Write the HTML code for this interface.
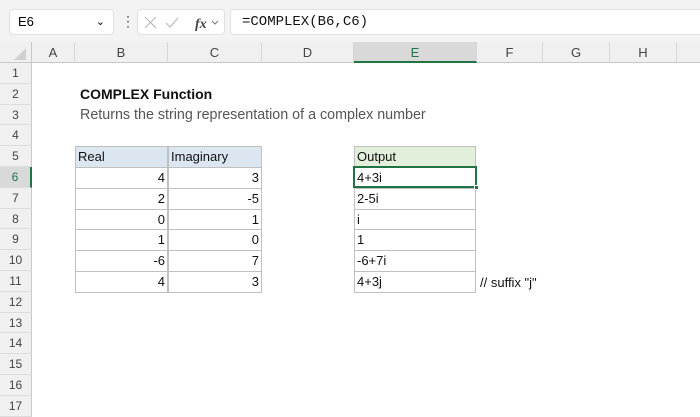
<!DOCTYPE html><html><head><style>
body{margin:0;width:700px;height:400px;overflow:hidden;background:#fff;font-family:"Liberation Sans",sans-serif;position:relative}
div{position:absolute;box-sizing:border-box}
.top{left:0;top:0;width:700px;height:42px;background:#f3f3f3}
.box{background:#fff;border:1px solid #e0e0e0;border-radius:4px}
.ch{top:42px;height:21px;background:#f0f0f0;border-right:1px solid #d6d6d6;border-bottom:1px solid #c8c8c8;font-size:13px;color:#444;text-align:center;line-height:21px}
.rh{left:0;width:32px;height:20.8px;background:#f0f0f0;border-bottom:1px solid #dcdcdc;border-right:1px solid #c8c8c8;font-size:12px;color:#444;text-align:center;line-height:21px}
.c{height:21.8px;border:1px solid #c0c0c0;margin:-1px 0 0 -1px;font-size:13px;line-height:20px;padding:0 2px;color:#111}
.r{text-align:right}
</style></head><body>
<div class="top"></div>
<div class="box" style="left:9px;top:9px;width:105px;height:26px;font-size:13px;line-height:24px;padding-left:8px">E6<span style="position:absolute;right:8px;top:0;font-size:11px">&#8964;</span></div>
<div style="left:121px;top:14px;font-size:14px;color:#555;line-height:14px">&#8942;</div>
<div class="box" style="left:137px;top:9px;width:88px;height:26px;">
<svg width="88" height="26" style="position:absolute;left:0;top:0"><path d="M7 7l11 11M18 7L7 18" stroke="#bbb" stroke-width="1.2" fill="none"/><path d="M28 13l4 4 8-9" stroke="#bbb" stroke-width="1.2" fill="none"/><text x="57" y="18" font-family="Liberation Serif" font-style="italic" font-weight="bold" font-size="14" fill="#444">fx</text><path d="M74 11l3 3 3-3" stroke="#777" fill="none"/></svg></div>
<div class="box" style="left:230px;top:9px;width:480px;height:26px;font-family:'Liberation Mono',monospace;font-size:14px;line-height:24px;padding-left:11px;color:#111">=COMPLEX(B6,C6)</div>
<div style="left:0;top:42px;width:32px;height:21px;background:#f0f0f0;border-right:1px solid #c8c8c8;border-bottom:1px solid #c8c8c8"><svg width="32" height="21" style="position:absolute;left:0;top:0"><path d="M26 6v12H14z" fill="#d0d0d0"/></svg></div>
<div class="ch" style="left:32px;width:43px">A</div>
<div class="ch" style="left:75px;width:93px">B</div>
<div class="ch" style="left:168px;width:94px">C</div>
<div class="ch" style="left:262px;width:92px">D</div>
<div class="ch" style="left:354px;width:123px;background:#d9d9d9;border-bottom:2px solid #217346;color:#217346">E</div>
<div class="ch" style="left:477px;width:66px">F</div>
<div class="ch" style="left:543px;width:67px">G</div>
<div class="ch" style="left:610px;width:67px">H</div>
<div class="ch" style="left:677px;width:30px"></div>
<div class="rh" style="top:63px">1</div><div class="rh" style="top:83.8px">2</div><div class="rh" style="top:104.6px">3</div><div class="rh" style="top:125.4px">4</div><div class="rh" style="top:146.2px">5</div>
<div class="rh" style="top:167px;background:#d9d9d9;color:#217346;border-right:2px solid #217346">6</div>
<div class="rh" style="top:187.8px">7</div><div class="rh" style="top:208.6px">8</div><div class="rh" style="top:229.4px">9</div><div class="rh" style="top:250.2px">10</div><div class="rh" style="top:271px">11</div><div class="rh" style="top:291.8px">12</div><div class="rh" style="top:312.6px">13</div><div class="rh" style="top:333.4px">14</div><div class="rh" style="top:354.2px">15</div><div class="rh" style="top:375px">16</div><div class="rh" style="top:395.8px">17</div>
<div style="left:80px;top:86px;font-size:14px;font-weight:bold;color:#111">COMPLEX Function</div>
<div style="left:80px;top:107px;font-size:14.3px;color:#555">Returns the string representation of a complex number</div>
<div class="c" style="left:76px;top:147.2px;width:93px;background:#dce6f1">Real</div>
<div class="c" style="left:169px;top:147.2px;width:94px;background:#dce6f1">Imaginary</div>
<div class="c r" style="left:76px;top:168px;width:93px">4</div><div class="c r" style="left:169px;top:168px;width:94px">3</div>
<div class="c r" style="left:76px;top:188.8px;width:93px">2</div><div class="c r" style="left:169px;top:188.8px;width:94px">-5</div>
<div class="c r" style="left:76px;top:209.6px;width:93px">0</div><div class="c r" style="left:169px;top:209.6px;width:94px">1</div>
<div class="c r" style="left:76px;top:230.4px;width:93px">1</div><div class="c r" style="left:169px;top:230.4px;width:94px">0</div>
<div class="c r" style="left:76px;top:251.2px;width:93px">-6</div><div class="c r" style="left:169px;top:251.2px;width:94px">7</div>
<div class="c r" style="left:76px;top:272px;width:93px">4</div><div class="c r" style="left:169px;top:272px;width:94px">3</div>
<div class="c" style="left:355px;top:147.2px;width:122px;background:#e2efda">Output</div>
<div class="c" style="left:355px;top:168px;width:122px">4+3i</div>
<div class="c" style="left:355px;top:188.8px;width:122px">2-5i</div>
<div class="c" style="left:355px;top:209.6px;width:122px">i</div>
<div class="c" style="left:355px;top:230.4px;width:122px">1</div>
<div class="c" style="left:355px;top:251.2px;width:122px">-6+7i</div>
<div class="c" style="left:355px;top:272px;width:122px">4+3j</div>
<div style="left:353px;top:166px;width:124px;height:22px;border:2px solid #217346"></div>
<div style="left:474px;top:185px;width:5px;height:5px;background:#217346;border:1px solid #fff"></div>
<div style="left:480px;top:273px;font-size:13px;line-height:20px;color:#111">// suffix "j"</div>
</body></html>
